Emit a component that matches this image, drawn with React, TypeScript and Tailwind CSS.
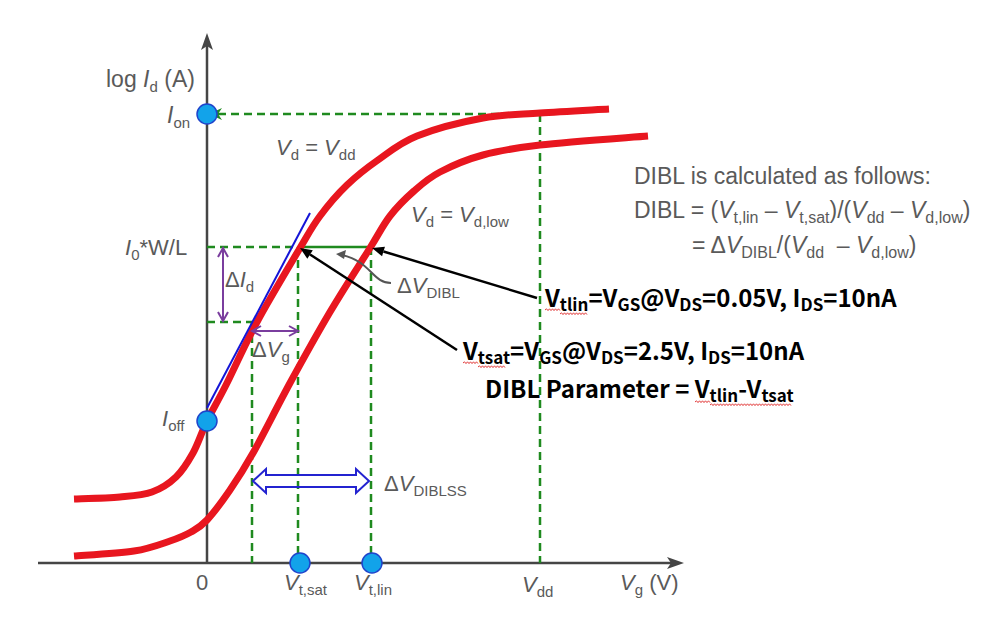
import React from "react";

type Part = { t: string; i?: boolean; s?: boolean };
type Pt = [number, number];

const SANS = "'Liberation Sans', Arial, sans-serif";
const BOLD = "'Noto Sans CJK KR', 'Open Sans', sans-serif";

// markup: ~x~ italic, _{x} subscript
function parse(src: string): Part[] {
  const out: Part[] = [];
  const re = /~([^~]+)~|_\{([^}]+)\}|([^~_]+)/g;
  let m: RegExpExecArray | null;
  while ((m = re.exec(src))) {
    if (m[1]) out.push({ t: m[1], i: true });
    else if (m[2]) out.push({ t: m[2], s: true });
    else out.push({ t: m[3] });
  }
  return out;
}

function Rich({
  x,
  y,
  src,
  size = 22,
  sub = 15,
  shift = 5,
  bold = false,
  fill = "#5a5a5a",
}: {
  x: number;
  y: number;
  src: string;
  size?: number;
  sub?: number;
  shift?: number;
  bold?: boolean;
  fill?: string;
}) {
  let down = false;
  return (
    <text
      x={x}
      y={y}
      fontSize={size}
      fontFamily={bold ? BOLD : SANS}
      fontWeight={bold ? 700 : 400}
      fill={fill}
      className="whitespace-pre"
    >
      {parse(src).map((p, k) => {
        let dy = 0;
        if (p.s && !down) {
          dy = shift;
          down = true;
        } else if (!p.s && down) {
          dy = -shift;
          down = false;
        }
        return (
          <tspan
            key={k}
            dy={dy || undefined}
            fontSize={p.s ? sub : undefined}
            fontStyle={p.i ? "italic" : undefined}
          >
            {p.t}
          </tspan>
        );
      })}
    </text>
  );
}

function smooth(pts: Pt[]) {
  let d = `M${pts[0][0]},${pts[0][1]}`;
  for (let i = 0; i < pts.length - 1; i++) {
    const p0 = pts[i - 1] || pts[i];
    const p1 = pts[i];
    const p2 = pts[i + 1];
    const p3 = pts[i + 2] || p2;
    const c1 = [p1[0] + (p2[0] - p0[0]) / 6, p1[1] + (p2[1] - p0[1]) / 6];
    const c2 = [p2[0] - (p3[0] - p1[0]) / 6, p2[1] - (p3[1] - p1[1]) / 6];
    d += ` C${c1[0].toFixed(1)},${c1[1].toFixed(1)} ${c2[0].toFixed(1)},${c2[1].toFixed(1)} ${p2[0]},${p2[1]}`;
  }
  return d;
}

function squiggle(x1: number, x2: number, y: number) {
  let d = `M${x1},${y}`;
  let up = true;
  for (let x = x1 + 1.5; x <= x2; x += 1.5) {
    d += ` L${x},${up ? y - 1.2 : y + 0.6}`;
    up = !up;
  }
  return d;
}

const upper: Pt[] = [
  [74, 499], [120, 497], [152, 492], [176, 477], [193, 453], [207, 421],
  [226, 385], [257, 322], [300, 248], [320, 216], [347, 185], [378, 160],
  [417, 136], [483, 118], [540, 113], [609, 109],
];
const lower: Pt[] = [
  [74, 556], [134, 551], [170, 541], [191, 532], [207, 520], [230, 490],
  [253, 453], [290, 383], [330, 312], [370, 248], [390, 216], [414, 191],
  [440, 172], [483, 155], [540, 145], [648, 136],
];

function Arrow({ x1, y1, x2, y2, color, w = 2.5, len = 12, half = 5 }: {
  x1: number; y1: number; x2: number; y2: number; color: string; w?: number; len?: number; half?: number;
}) {
  const a = Math.atan2(y2 - y1, x2 - x1);
  const bx = x2 - Math.cos(a) * len;
  const by = y2 - Math.sin(a) * len;
  const px = -Math.sin(a) * half;
  const py = Math.cos(a) * half;
  return (
    <g>
      <line x1={x1} y1={y1} x2={bx} y2={by} stroke={color} strokeWidth={w} />
      <polygon points={`${x2},${y2} ${bx + px},${by + py} ${bx - px},${by - py}`} fill={color} />
    </g>
  );
}

const GREEN = "#1f8a1f";
const DASH = "8 5";

export default function App() {
  return (
    <div className="w-[993px] h-[623px] bg-white overflow-hidden">
      <svg width={993} height={623} viewBox="0 0 993 623" className="block">
        {/* axes */}
        <line x1={207} y1={563} x2={207} y2={44} stroke="#454545" strokeWidth={2.5} />
        <polygon points="207,33 201,50 207,46 213,50" fill="#454545" />
        <line x1={38} y1={563} x2={674} y2={563} stroke="#454545" strokeWidth={2.5} />
        <polygon points="684,563 667,557 671,563 667,569" fill="#454545" />

        {/* green guides */}
        <g stroke={GREEN} strokeWidth={2.5} fill="none">
          <line x1={218} y1={114} x2={540} y2={114} strokeDasharray={DASH} />
          <line x1={540} y1={114} x2={540} y2={563} strokeDasharray={DASH} />
          <line x1={207} y1={247} x2={298} y2={247} strokeDasharray={DASH} />
          <line x1={298} y1={247} x2={371} y2={247} />
          <line x1={207} y1={322} x2={252} y2={322} strokeDasharray={DASH} />
          <line x1={252} y1={322} x2={252} y2={563} strokeDasharray={DASH} />
          <line x1={298} y1={247} x2={298} y2={563} strokeDasharray={DASH} />
          <line x1={371} y1={247} x2={371} y2={563} strokeDasharray={DASH} />
        </g>
        <polygon points="209,114 222,108 218,114 222,120" fill={GREEN} />

        {/* curves */}
        <path d={smooth(upper)} stroke="#e8161f" strokeWidth={7} fill="none" />
        <path d={smooth(lower)} stroke="#e8161f" strokeWidth={7} fill="none" />

        {/* tangent */}
        <line x1={207} y1={408} x2={310} y2={213} stroke="#1414d6" strokeWidth={2} />

        {/* purple deltas */}
        <g stroke="#7a3d9e" strokeWidth={2} fill="none">
          <line x1={223} y1={250} x2={223} y2={319} />
          <polyline points="218,257 223,248 228,257" />
          <polyline points="218,312 223,321 228,312" />
          <line x1={254} y1={331} x2={296} y2={331} />
          <polyline points="261,326 252,331 261,336" />
          <polyline points="289,326 298,331 289,336" />
        </g>

        {/* ΔV_DIBL curved pointer */}
        <path d="M391,283 C372,283 372,262 342,255" stroke="#555" strokeWidth={2} fill="none" />
        <polygon points="336,254 346,250 344,259" fill="#555" />

        {/* hollow double arrow */}
        <polygon
          points="253,481 266,469 266,475 356,475 356,469 369,481 356,493 356,487 266,487 266,493"
          fill="none"
          stroke="#2323d0"
          strokeWidth={2}
        />

        {/* black pointers */}
        <Arrow x1={537} y1={298} x2={372} y2={248} color="#000" />
        <Arrow x1={457} y1={350} x2={300} y2={248} color="#000" />

        {/* dots */}
        <g fill="#12a3ea" stroke="#1f44cc" strokeWidth={1.5}>
          <circle cx={207} cy={114} r={10} />
          <circle cx={207} cy={421} r={10} />
          <circle cx={300} cy={563} r={10} />
          <circle cx={372} cy={563} r={10} />
        </g>

        {/* axis & curve labels */}
        <Rich x={106} y={87} src="log ~I~_{d} (A)" size={23} />
        <Rich x={167} y={123} src="~I~_{on}" size={23} />
        <Rich x={276} y={155} src="~V~_{d} = ~V~_{dd}" />
        <Rich x={411} y={222} src="~V~_{d} = ~V~_{d,low}" />
        <Rich x={125} y={255} src="~I~_{0}*W/L" />
        <Rich x={225} y={287} src="Δ~I~_{d}" />
        <Rich x={397} y={293} src="Δ~V~_{DIBL}" />
        <Rich x={252} y={357} src="Δ~V~_{g}" />
        <Rich x={162} y={426} src="~I~_{off}" />
        <Rich x={384} y={491} src="Δ~V~_{DIBLSS}" />
        <Rich x={196} y={590} src="0" />
        <Rich x={284} y={590} src="~V~_{t,sat}" />
        <Rich x={354} y={590} src="~V~_{t,lin}" />
        <Rich x={522} y={592} src="~V~_{dd}" />
        <Rich x={620} y={590} src="~V~_{g} (V)" />

        {/* formula */}
        <Rich x={634} y={184} src="DIBL is calculated as follows:" size={23} />
        <Rich x={634} y={218} src="DIBL = (~V~_{t,lin} – ~V~_{t,sat})/(~V~_{dd} – ~V~_{d,low})" size={23} sub={16} />
        <Rich x={692} y={253} src="= Δ~V~_{DIBL}/(~V~_{dd}  – ~V~_{d,low})" size={23} sub={16} />

        {/* bold notes */}
        <Rich x={545} y={307} src="V_{tlin}=V_{GS}@V_{DS}=0.05V, I_{DS}=10nA" size={24} sub={17} shift={4} bold fill="#000" />
        <Rich x={463} y={360} src="V_{tsat}=V_{GS}@V_{DS}=2.5V, I_{DS}=10nA" size={24} sub={17} shift={4} bold fill="#000" />
        <Rich x={485} y={398} src="DIBL Parameter = V_{tlin}-V_{tsat}" size={24} sub={17} shift={4} bold fill="#000" />

        {/* spell-check squiggles */}
        <g stroke="#e23a3a" strokeWidth={1} fill="none">
          <path d={squiggle(545, 560, 310)} />
          <path d={squiggle(560, 587, 314)} />
          <path d={squiggle(463, 478, 363)} />
          <path d={squiggle(478, 506, 367)} />
          <path d={squiggle(695, 710, 402)} />
          <path d={squiggle(710, 792, 405)} />
        </g>
      </svg>
    </div>
  );
}
